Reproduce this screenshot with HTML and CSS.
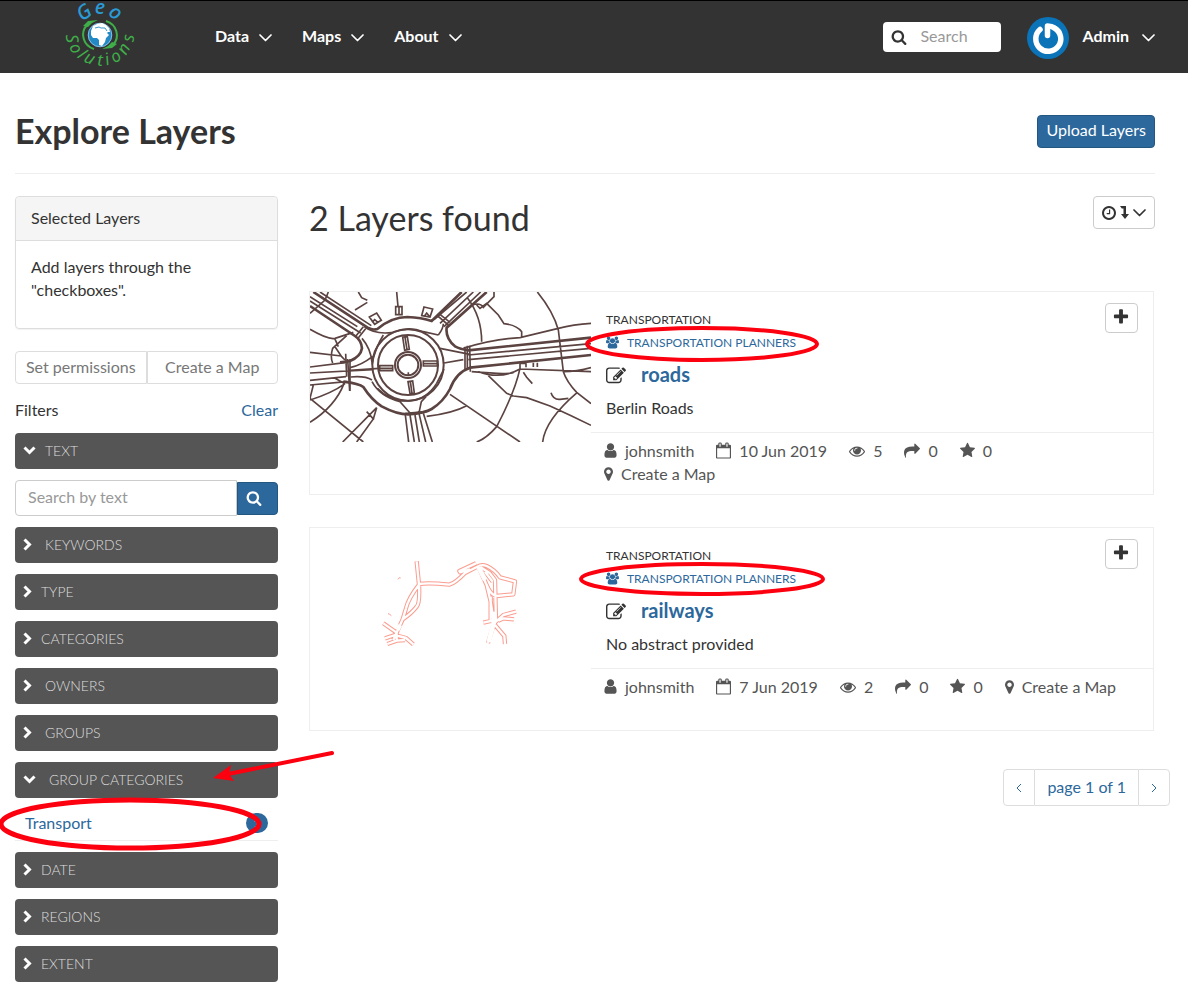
FILE: index.html
```html
<!DOCTYPE html>
<html lang="en">
<head>
<meta charset="utf-8">
<meta name="viewport" content="width=device-width, initial-scale=1">
<title>Explore Layers</title>
<link rel="stylesheet" href="styles.css">
</head>
<body>
<svg class="sprite" aria-hidden="true">
  <symbol id="plus" viewBox="0 0 1792 1792"><path d="M1600 736v192q0 40-28 68t-68 28h-416v416q0 40-28 68t-68 28h-192q-40 0-68-28t-28-68v-416h-416q-40 0-68-28t-28-68v-192q0-40 28-68t68-28h416v-416q0-40 28-68t68-28h192q40 0 68 28t28 68v416h416q40 0 68 28t28 68z"/></symbol>
  <symbol id="search" viewBox="0 0 1792 1792"><path d="M1216 832q0-185-131.5-316.5t-316.5-131.5-316.5 131.5-131.5 316.5 131.5 316.5 316.5 131.5 316.5-131.5 131.5-316.5zm512 832q0 52-38 90t-90 38q-54 0-90-38l-343-342q-179 124-399 124-143 0-273.5-55.5t-225-150-150-225-55.5-273.5 55.5-273.5 150-225 225-150 273.5-55.5 273.5 55.5 225 150 150 225 55.5 273.5q0 220-124 399l343 343q37 37 37 90z"/></symbol>
  <symbol id="user" viewBox="256 0 1280 1792"><path d="M1536 1399q0 109-62.5 187t-150.5 78h-854q-88 0-150.500-78t-62.500-187q0-85 8.500-160.500t31.500-152 58.500-131 94-89 134.500-34.500q131 128 313 128t313-128q76 0 134.500 34.500t94 89 58.500 131 31.500 152 8.500 160.500zm-256-887q0 159-112.500 271.500t-271.500 112.500-271.500-112.500-112.500-271.500 112.500-271.500 271.500-112.500 271.500 112.500 112.500 271.500z"/></symbol>
  <symbol id="eye" viewBox="0 0 1792 1792"><path d="M1664 960q-152-236-381-353 61 104 61 225 0 185-131.500 316.500t-316.500 131.500-316.500-131.500-131.500-316.500q0-121 61-225-229 117-381 353 133 205 333.500 326.500t434.500 121.500 434.500-121.500 333.500-326.500zm-720-384q0-20-14-34t-34-14q-125 0-214.500 89.500t-89.500 214.500q0 20 14 34t34 14 34-14 14-34q0-86 61-147t147-61q20 0 34-14t14-34zm848 384q0 34-20 69-140 230-376.500 368.500t-499.500 138.500-499.500-139-376.500-368q-20-35-20-69t20-69q140-229 376.500-368t499.500-139 499.500 139 376.500 368q20 35 20 69z"/></symbol>
  <symbol id="share" viewBox="0 0 1792 1792"><path d="M1792 640q0 26-19 45l-512 512q-19 19-45 19t-45-19-19-45v-256h-224q-98 0-175.500 6t-154 21.500-133 42.500-105.500 69.500-80 101-48.500 138.500-17.500 181q0 55 5 123 0 6 2.500 23.500t2.500 26.500q0 15-8.500 25t-23.500 10q-16 0-28-17-7-9-13-22t-13.500-30-10.500-24q-127-285-127-451 0-199 53-333 162-403 875-403h224v-256q0-26 19-45t45-19 45 19l512 512q19 19 19 45z"/></symbol>
  <symbol id="star" viewBox="64 0 1664 1792"><path d="M1728 647q0 22-26 48l-363 354 86 500q1 7 1 20 0 21-10.500 35.500t-30.500 14.500q-19 0-40-12l-449-236-449 236q-22 12-40 12-21 0-31.500-14.500t-10.500-35.500q0-6 2-20l86-500-364-354q-25-27-25-48 0-37 56-46l502-73 225-455q19-41 49-41t49 41l225 455 502 73q56 9 56 46z"/></symbol>
  <symbol id="pin" viewBox="384 0 1024 1792"><path d="M1152 640q0-106-75-181t-181-75-181 75-75 181 75 181 181 75 181-75 75-181zm256 0q0 109-33 179l-364 774q-16 33-47.500 52t-67.500 19-67.500-19-46.500-52l-365-774q-33-70-33-179 0-212 150-362t362-150 362 150 150 362z"/></symbol>
  <symbol id="calendar" viewBox="64 0 1664 1792"><path d="M192 1664h1408v-1024h-1408v1024zm384-1216v-288q0-14-9-23t-23-9h-64q-14 0-23 9t-9 23v288q0 14 9 23t23 9h64q14 0 23-9t9-23zm768 0v-288q0-14-9-23t-23-9h-64q-14 0-23 9t-9 23v288q0 14 9 23t23 9h64q14 0 23-9t9-23zm384-64v1280q0 52-38 90t-90 38h-1408q-52 0-90-38t-38-90v-1280q0-52 38-90t90-38h128v-96q0-66 47-113t113-47h64q66 0 113 47t47 113v96h384v-96q0-66 47-113t113-47h64q66 0 113 47t47 113v96h128q52 0 90 38t38 90z"/></symbol>
  <symbol id="users" viewBox="0 0 1920 1792"><path d="M593 896q-162 5-265 128h-134q-82 0-138-40.500t-56-118.500q0-353 124-353 6 0 43.500 21t97.500 42.500 119 21.500q67 0 133-23-5 37-5 66 0 143 81 256zm1071 637q0 120-73 189.500t-194 69.500h-874q-121 0-194-69.500t-73-189.500q0-53 3.500-103.500t14-109 26.500-108.500 43-97.500 62-81 85.500-53.500 111.500-20q10 0 43 21.500t73 48 107 48 135 21.500 135-21.500 107-48 73-48 43-21.500q61 0 111.500 20t85.500 53.500 62 81 43 97.500 26.500 108.500 14 109 3.500 103.500zm-1024-1277q0 106-75 181t-181 75-181-75-75-181 75-181 181-75 181 75 75 181zm704 384q0 159-112.500 271.500t-271.500 112.500-271.500-112.500-112.500-271.500 112.500-271.500 271.500-112.500 271.500 112.500 112.500 271.500zm576 225q0 78-56 118.500t-138 40.500h-134q-103-123-265-128 81-113 81-256 0-29-5-66 66 23 133 23 59 0 119-21.500t97.500-42.500 43.500-21q124 0 124 353zm-128-609q0 106-75 181t-181 75-181-75-75-181 75-181 181-75 181 75 75 181z"/></symbol>
  <symbol id="edit" viewBox="0 0 1792 1792"><path d="M888 1184l116-116-152-152-116 116v56h96v96h56zm440-720q-16-16-33 1l-350 350q-17 17-1 33t33-1l350-350q17-17 1-33zm80 594v190q0 119-84.500 203.500t-203.500 84.500h-832q-119 0-203.500-84.500t-84.500-203.500v-832q0-119 84.500-203.500t203.500-84.500h832q63 0 117 25 15 7 18 23 3 17-9 29l-49 49q-14 14-32 8-23-6-45-6h-832q-66 0-113 47t-47 113v832q0 66 47 113t113 47h832q66 0 113-47t47-113v-126q0-13 9-22l64-64q15-15 35-7t20 29zm-96-738l288 288-672 672h-288v-288zm444 132l-92 92-288-288 92-92q28-28 68-28t68 28l152 152q28 28 28 68t-28 68z"/></symbol>
  <symbol id="clock" viewBox="128 128 1536 1536"><path d="M1024 544v448q0 14-9 23t-23 9h-320q-14 0-23-9t-9-23v-64q0-14 9-23t23-9h224v-352q0-14 9-23t23-9h64q14 0 23 9t9 23zm416 352q0-148-73-273t-198-198-273-73-273 73-198 198-73 273 73 273 198 198 273 73 273-73 198-198 73-273zm224 0q0 209-103 385.500t-279.500 279.500-385.500 103-385.500-103-279.500-279.500-103-385.500 103-385.500 279.500-279.500 385.500-103 385.500 103 279.500 279.500 103 385.500z"/></symbol>
  <symbol id="leveldown" viewBox="0 0 9 13"><path d="M0 0h6v8h3l-4 5-4-5h2.500V2.500H1.800z"/></symbol>
  <symbol id="angledown" viewBox="0 0 13 8"><path d="M1 1l5.500 5.500L12 1" fill="none" stroke="currentColor" stroke-width="1.700" stroke-linecap="round" stroke-linejoin="round"/></symbol>
  <symbol id="chevdown" viewBox="0 0 13 9"><path d="M1.500 1.500l5 5 5-5" fill="none" stroke="currentColor" stroke-width="3"/></symbol>
  <symbol id="chevright" viewBox="0 0 9 13"><path d="M1.500 1.500l5 5-5 5" fill="none" stroke="currentColor" stroke-width="3"/></symbol>
</svg>

<header class="topbar">
  <a class="brand" href="#" aria-label="Geo Solutions">
    <svg class="logo" viewBox="60 1 80 72">
      <g class="logo-geo">
        <text x="100" y="14" transform="rotate(-35 100 35)">G</text>
        <text x="100" y="14">e</text>
        <text x="100" y="14" transform="rotate(35 100 35)">o</text>
      </g>
      <g class="logo-sol">
        <text x="100" y="69" transform="rotate(83 100 35)">S</text>
        <text x="100" y="68" transform="rotate(61 100 35)">o</text>
        <text x="100" y="67" transform="rotate(43 100 35)">l</text>
        <text x="100" y="66" transform="rotate(24 100 35)">u</text>
        <text x="100" y="66" transform="rotate(0 100 35)">t</text>
        <text x="100" y="66" transform="rotate(-16 100 35)">i</text>
        <text x="100" y="67" transform="rotate(-36 100 35)">o</text>
        <text x="100" y="68" transform="rotate(-60 100 35)">n</text>
        <text x="100" y="69" transform="rotate(-84 100 35)">s</text>
      </g>
      <circle cx="100" cy="35" r="12" fill="#2389c4"/>
      <circle cx="100" cy="35" r="11.800" fill="none" stroke="#9fd0ea" stroke-width=".8"/>
      <path fill="#fff" d="M91 31l2-5 4-2 5-1 4 2 3 3 1 4-2 0-1 1 2 2-3 3-1 4-3 4-3-1 0-5-2-2-4 0-2-3z"/>
      <path fill="none" stroke="#2389c4" stroke-width=".9" d="M95 28l4-1 2 1 4 0 2 3"/>
      <path fill="none" stroke="#3fae49" stroke-width="2" d="M94 49a16 15 0 0 1-7-24"/>
      <path fill="#3fae49" d="M83 26l5-5 10-1-6 3-4 4z"/>
      <path fill="none" stroke="#3fae49" stroke-width="2" d="M106 21a16 15 0 0 1 7 24"/>
      <path fill="#3fae49" d="M117 44l-5 4-10 1 6-3 4-4z"/>
    </svg>
  </a>
  <nav class="menu">
    <a href="#">Data <svg class="angle"><use href="#angledown"/></svg></a>
    <a href="#">Maps <svg class="angle"><use href="#angledown"/></svg></a>
    <a href="#">About <svg class="angle"><use href="#angledown"/></svg></a>
  </nav>
  <form class="topsearch">
    <svg class="i16"><use href="#search"/></svg>
    <input type="text" placeholder="Search" aria-label="Search">
  </form>
  <a class="account" href="#">
    <svg class="avatar" viewBox="0 0 42 42">
      <circle cx="21" cy="21" r="21" fill="#0b74b9"/>
      <path d="M13 12.500a12.500 12.500 0 1 0 14.500-1.500Q25 9 20.500 9v9.500" fill="none" stroke="#fff" stroke-width="5.500" stroke-linecap="round" stroke-linejoin="round"/>
    </svg>
    Admin <svg class="angle"><use href="#angledown"/></svg>
  </a>
</header>

<main class="page">
  <div class="titlebar">
    <h1>Explore Layers</h1>
    <button class="btn primary" type="button">Upload Layers</button>
  </div>

  <div class="columns">
    <aside class="sidebar">
      <section class="panel">
        <div class="panel-head">Selected Layers</div>
        <p class="panel-body">Add layers through the "checkboxes".</p>
      </section>
      <div class="split">
        <button type="button">Set permissions</button>
        <button type="button">Create a Map</button>
      </div>
      <div class="filters-head"><span>Filters</span><a href="#">Clear</a></div>
      <div class="filters">
        <button class="filter" type="button"><svg class="cd"><use href="#chevdown"/></svg>TEXT</button>
        <form class="textsearch">
          <input type="text" placeholder="Search by text" aria-label="Search by text">
          <button type="button" aria-label="Search"><svg class="i16"><use href="#search"/></svg></button>
        </form>
        <button class="filter wide" type="button"><svg class="cr"><use href="#chevright"/></svg>KEYWORDS</button>
        <button class="filter" type="button"><svg class="cr"><use href="#chevright"/></svg>TYPE</button>
        <button class="filter" type="button"><svg class="cr"><use href="#chevright"/></svg>CATEGORIES</button>
        <button class="filter wide" type="button"><svg class="cr"><use href="#chevright"/></svg>OWNERS</button>
        <button class="filter wide" type="button"><svg class="cr"><use href="#chevright"/></svg>GROUPS</button>
        <div class="group">
          <button class="filter wide" type="button"><svg class="cd"><use href="#chevdown"/></svg>GROUP CATEGORIES</button>
          <a class="option" href="#">Transport <span class="badge">1</span></a>
        </div>
        <button class="filter" type="button"><svg class="cr"><use href="#chevright"/></svg>DATE</button>
        <button class="filter" type="button"><svg class="cr"><use href="#chevright"/></svg>REGIONS</button>
        <button class="filter" type="button"><svg class="cr"><use href="#chevright"/></svg>EXTENT</button>
      </div>
    </aside>

    <section class="results">
      <div class="results-head">
        <h2>2 Layers found</h2>
        <button class="sort" type="button" aria-label="Sort order"><svg class="i14"><use href="#clock"/></svg><svg class="level"><use href="#leveldown"/></svg><svg class="angle"><use href="#angledown"/></svg></button>
      </div>

      <article class="card">
        <svg class="thumb" viewBox="30 21 843 450" fill="none" stroke="#5b4341" stroke-width="6" role="img" aria-label="Street map">
          <circle cx="324" cy="240" r="107"/><circle cx="324" cy="240" r="90"/>
          <circle cx="324" cy="240" r="39"/><circle cx="324" cy="240" r="31"/>
          <path stroke-width="8" d="M40 21L205 129Q218 136 232 132Q275 96 322 96Q365 98 395 108L485 21M560 21L440 128Q436 160 465 184Q480 192 505 196L873 158M30 63L165 153Q184 166 186 190Q182 215 150 228M120 232L152 228M130 290Q178 296 190 306Q215 345 245 364Q290 388 325 388Q375 384 395 372Q430 350 450 312Q468 262 510 248L873 210"/>
          <path stroke-width="5" d="M30 35L172 125M60 21L214 122M30 48L182 144M500 21L402 104M520 21L420 115M542 21L432 125M505 210L873 176M505 224L873 190M193 125Q225 150 280 142Q325 122 370 140L415 150M190 125L166 155M198 130L174 160M417 86L450 112M412 92L445 120M415 150Q430 130 430 116M420 190L510 208M432 234L490 224M250 150Q225 190 216 238M186 160Q212 190 216 232M150 256L238 250M30 246L135 233M30 264L218 254M30 286L138 275M30 300L140 290M30 202L124 213M152 276Q195 272 216 285M150 248Q185 240 218 214M216 290Q240 335 300 350L330 384M232 310Q270 350 330 348Q380 342 410 295L432 252M30 340L40 300M30 345Q95 325 135 296M30 412Q105 365 132 296M135 296L105 280M30 85L75 45L85 21M30 133Q85 165 105 160L160 142M140 152L98 190Q90 215 98 234M105 185L125 215L135 225M104 160L115 185M30 340L190 471M128 471L230 368L220 402L170 471M200 380L222 404M316 390L326 471M330 390L343 471M345 390L358 471M357 385L377 471M370 385L397 471M316 385L380 380M356 388L364 350L378 335M380 394Q460 384 500 362M450 328L660 471M515 260Q640 270 640 262M640 333L680 338L750 363Q810 390 873 421M565 272L620 325L640 333M660 250Q645 320 590 425Q560 460 530 471M535 260Q600 285 660 252L873 260M660 236V255M670 262L680 277L697 296M678 236V247M700 233V246M712 233V246M658 235H680M712 21Q760 80 775 135L790 260Q800 290 830 322L873 356M832 322Q735 405 728 471M790 260Q830 260 873 248M753 323Q760 345 780 343L805 340M502 38Q545 95 545 170M490 190Q580 162 660 158L775 130Q820 118 873 115M510 62Q540 50 550 67L582 35V21M530 60L540 70L560 55L595 90L612 116Q650 120 665 140V158M165 75L202 52M175 21L185 38L202 46M290 21L294 65M287 65H306V89H287zM297 65V89M208 96L230 84L244 106L224 118zM216 112L224 104L234 112M372 66L398 72L390 96L365 92zM374 92L380 84L388 94"/>
          <path stroke-width="5" d="M308 156L322 155L328 193L314 196zM315 156L321 194M324 290L338 288L343 324L330 326zM331 289L336 325M239 242H278V257H239zM239 250H278M370 228L412 228V243H370zM370 236H412M495 185L495 255M502 182L502 255M509 182L511 260M137 206L140 275M143 222L149 318M150 222V318M325 262V271"/>
        </svg>
        <div class="card-main">
          <div class="card-top">
            <div class="info">
              <div class="cat">TRANSPORTATION</div>
              <a class="cat planners" href="#"><svg class="i13"><use href="#users"/></svg>TRANSPORTATION PLANNERS</a>
              <h4><svg class="i20"><use href="#edit"/></svg><a href="#">roads</a></h4>
              <p>Berlin Roads</p>
            </div>
            <button class="add" type="button" aria-label="Select roads"><svg class="i18"><use href="#plus"/></svg></button>
          </div>
          <div class="meta">
            <a href="#"><svg class="w13"><use href="#user"/></svg>johnsmith</a>
            <a href="#"><svg class="w15"><use href="#calendar"/></svg>10 Jun 2019</a>
            <a href="#"><svg class="i16"><use href="#eye"/></svg>5</a>
            <a href="#"><svg class="i16"><use href="#share"/></svg>0</a>
            <a href="#"><svg class="w15"><use href="#star"/></svg>0</a>
            <a href="#"><svg class="w9"><use href="#pin"/></svg>Create a Map</a>
          </div>
        </div>
      </article>

      <article class="card">
        <svg class="thumb" viewBox="-180 -36 843 450" fill="none" role="img" aria-label="Railway map">
          <defs><path id="rails" stroke-linejoin="round" d="M140 64L147 134Q115 175 108 205L98 238L70 300M147 134Q150 190 140 200Q125 220 98 238M147 132Q175 127 238 134Q255 130 285 99L322 80Q335 72 350 78Q375 90 390 112L435 124L430 163L380 168M318 70L268 93L270 97L300 88M325 80L350 135L362 185L372 250L354 309M332 82L360 100L375 120L378 245M350 135Q362 165 380 168M345 95L368 125M362 170V240M376 240L340 248M372 250L400 225L438 215M385 242L400 235L432 238M375 255L403 288L405 312M40 250L80 278M45 295L75 285L108 294L130 313M52 312L80 302L105 300M80 278V300"/></defs>
          <use href="#rails" stroke="#fa9d90" stroke-width="13"/>
          <use href="#rails" stroke="#fff" stroke-width="7"/>
          <path stroke="#fff" stroke-width="14" d="M326 82L345 120M372 215V245L356 306M82 270L90 255"/>
          <path stroke="#fa9d90" stroke-width="3" d="M84 118l4-5 4 1M54 221l5 2 5 4"/>
        </svg>
        <div class="card-main">
          <div class="card-top">
            <div class="info">
              <div class="cat">TRANSPORTATION</div>
              <a class="cat planners" href="#"><svg class="i13"><use href="#users"/></svg>TRANSPORTATION PLANNERS</a>
              <h4><svg class="i20"><use href="#edit"/></svg><a href="#">railways</a></h4>
              <p>No abstract provided</p>
            </div>
            <button class="add" type="button" aria-label="Select railways"><svg class="i18"><use href="#plus"/></svg></button>
          </div>
          <div class="meta">
            <a href="#"><svg class="w13"><use href="#user"/></svg>johnsmith</a>
            <a href="#"><svg class="w15"><use href="#calendar"/></svg>7 Jun 2019</a>
            <a href="#"><svg class="i16"><use href="#eye"/></svg>2</a>
            <a href="#"><svg class="i16"><use href="#share"/></svg>0</a>
            <a href="#"><svg class="w15"><use href="#star"/></svg>0</a>
            <a href="#"><svg class="w9"><use href="#pin"/></svg>Create a Map</a>
          </div>
        </div>
      </article>

      <nav class="pager" aria-label="Pages">
        <a href="#" aria-label="Previous"><svg class="pg" viewBox="0 0 6 10"><path d="M5 1L1 5l4 4"/></svg></a>
        <a class="now" href="#">page 1 of 1</a>
        <a href="#" aria-label="Next"><svg class="pg" viewBox="0 0 6 10"><path d="M1 1l4 4-4 4"/></svg></a>
      </nav>
    </section>
  </div>
</main>

<svg class="marks" width="840" height="860" fill="none" stroke="#fc000f" aria-hidden="true">
  <ellipse cx="702" cy="344" rx="115" ry="16" stroke-width="4"/>
  <ellipse cx="702" cy="579" rx="121" ry="15" stroke-width="4"/>
  <ellipse cx="130" cy="824" rx="129" ry="24" stroke-width="5"/>
  <path d="M332 753L228 774" stroke-width="4" stroke-linecap="round"/>
  <path d="M213 778L231 765L229 774L234 781z" fill="#fc000f" stroke="none"/>
</svg>
</body>
</html>
```

FILE: styles.css
```css
* { box-sizing: border-box; }

body {
  margin: 0;
  position: relative;
  background: #fff;
  color: #333;
  font: 16px/23px Lato, "Liberation Sans", sans-serif;
}

a { color: #2c689c; text-decoration: none; }
button, input { font: inherit; color: inherit; margin: 0; }
button { cursor: pointer; }
h1, h2, h4, p { margin: 0; }
svg { display: block; flex: none; fill: currentColor; }

.sprite { position: absolute; width: 0; height: 0; }
.i13 { width: 13px; height: 13px; }
.i14 { width: 14px; height: 14px; }
.i16 { width: 16px; height: 16px; }
.i18 { width: 18px; height: 18px; }
.i20 { width: 20px; height: 20px; }
.w13 { width: 13px; height: 17px; }
.w15 { width: 15px; height: 17px; }
.w9 { width: 9px; height: 16px; }
.angle { width: 13px; height: 8px; }
.level { width: 9px; height: 13px; }
.cd { width: 13px; height: 9px; }
.cr { width: 9px; height: 13px; }

.topbar {
  display: flex;
  align-items: center;
  height: 73px;
  padding: 0 33px 0 60px;
  border-top: 1px solid #000;
  background: #333;
  color: #fff;
}
.logo { width: 80px; height: 72px; overflow: visible; }
.logo text { text-anchor: middle; font-family: "Noto Sans", sans-serif; font-style: italic; }
.logo-geo { fill: #2a9bd6; font-size: 20px; font-weight: 500; }
.logo-sol { fill: #3fae49; font-size: 17px; }

.menu { display: flex; gap: 30px; margin-left: 75px; padding-bottom: 3px; }
.menu a, .account {
  display: flex;
  align-items: center;
  gap: 10px;
  color: #fff;
  font-weight: 700;
}
.menu svg, .account svg { margin-top: 4px; }
.topsearch {
  display: flex;
  align-items: center;
  gap: 13px;
  width: 118px;
  height: 30px;
  margin-left: auto;
  padding: 0 8px;
  border-radius: 4px;
  background: #fff;
  color: #333;
}
.topsearch input { width: 100%; min-width: 0; padding: 0 0 3px; border: 0; background: none; outline: 0; }
input::placeholder { color: #999; opacity: 1; }
.account { margin-left: 26px; padding-bottom: 3px; gap: 13px; }
.avatar { width: 42px; height: 42px; }

.page { padding: 0 33px 16px 15px; }
.titlebar {
  display: flex;
  align-items: center;
  justify-content: space-between;
  height: 101px;
  margin-bottom: 22px;
  padding-top: 16px;
  border-bottom: 1px solid #eee;
}
h1 { font-size: 34px; line-height: 40px; font-weight: 700; }
.btn { height: 33px; padding: 0 8px 3px; border: 1px solid #245682; border-radius: 4px; }
.primary { background: #2c689c; color: #fff; }

.columns { display: grid; grid-template-columns: 263px minmax(0, 1fr); gap: 30px; }

.panel { border: 1px solid #ddd; border-radius: 4px; box-shadow: 0 1px 1px rgba(0, 0, 0, .05); }
.panel-head { padding: 9px 15px 11px; border-bottom: 1px solid #ddd; border-radius: 4px 4px 0 0; background: #f5f5f5; }
.panel-body { padding: 14px 50px 27px 15px; }

.split { display: flex; margin-top: 22px; }
.split button { flex: 1; height: 33px; padding: 0 0 3px; border: 1px solid #ddd; background: #fff; color: #777; white-space: nowrap; }
.split button:first-child { border-radius: 4px 0 0 4px; }
.split button:last-child { border-radius: 0 4px 4px 0; }

.filters-head { display: flex; justify-content: space-between; margin: 14px 0 12px; }
.filters { display: flex; flex-direction: column; gap: 11px; }
.filter {
  display: flex;
  align-items: center;
  gap: 9px;
  width: 100%;
  height: 36px;
  padding: 0 8px 2px;
  border: 0;
  border-radius: 4px;
  background: #555;
  color: #ddd;
  font-size: 14px;
  font-weight: 300;
}
.filter svg { color: #fff; }
.wide { gap: 13px; }

.textsearch { display: flex; align-items: center; height: 36px; }
.textsearch input { flex: 1; min-width: 0; height: 36px; padding: 0 12px 3px; border: 1px solid #ccc; border-radius: 4px 0 0 4px; }
.textsearch button {
  width: 41px;
  height: 33px;
  padding: 0 8px;
  border: 1px solid #245682;
  border-radius: 0 4px 4px 0;
  background: #2c689c;
  color: #fff;
}

.option {
  display: flex;
  align-items: center;
  justify-content: space-between;
  height: 43px;
  padding: 7px 10px 0;
  border-bottom: 1px solid #eee;
}
.badge { width: 22px; border-radius: 10px; background: #2c689c; color: #fff; font-size: 12px; line-height: 20px; text-align: center; }

.results { padding-left: 1px; }
.results-head { display: flex; justify-content: space-between; align-items: flex-start; height: 95px; }
h2 { font-size: 34px; line-height: 44px; font-weight: 400; }
.sort { display: flex; align-items: center; gap: 4px; height: 33px; padding: 0 8px; border: 1px solid #ccc; border-radius: 4px; background: #fff; }

.card { display: flex; min-height: 204px; margin: 0 1px 32px 0; border: 1px solid #eee; }
.thumb { width: 281px; height: 150px; fill: none; }
.card-main { flex: 1; min-width: 0; }
.card-top { display: flex; justify-content: space-between; height: 141px; padding: 11px 15px 0; border-bottom: 1px solid #eee; }
.info { padding-top: 5px; }
.cat { display: flex; align-items: center; gap: 8px; font-size: 12px; line-height: 23px; }
h4 { display: flex; align-items: center; gap: 15px; margin: 8px 0 10px; font-size: 20px; line-height: 24px; font-weight: 700; }
h4 svg { margin-top: 3px; }
.add { display: flex; align-items: center; justify-content: center; width: 33px; height: 30px; padding: 0 2px 2px 0; border: 1px solid #ccc; border-radius: 4px; background: #fff; }
.meta { display: flex; flex-wrap: wrap; column-gap: 22px; padding: 6px 33px 9px 13px; }
.meta a { display: flex; align-items: center; gap: 8px; color: #555; }

.pager { display: flex; justify-content: flex-end; margin: 38px -15px 0 0; }
.pager a { display: flex; align-items: center; justify-content: center; width: 32px; height: 37px; border: 1px solid #ddd; }
.pager .now { width: auto; padding: 0 12px 2px; border-width: 1px 0; }
.pager a:first-child { border-radius: 4px 0 0 4px; }
.pager a:last-child { border-radius: 0 4px 4px 0; }
.pg { width: 6px; height: 10px; fill: none; stroke: currentColor; }

.marks { position: absolute; top: 0; left: 0; fill: none; pointer-events: none; }
```
